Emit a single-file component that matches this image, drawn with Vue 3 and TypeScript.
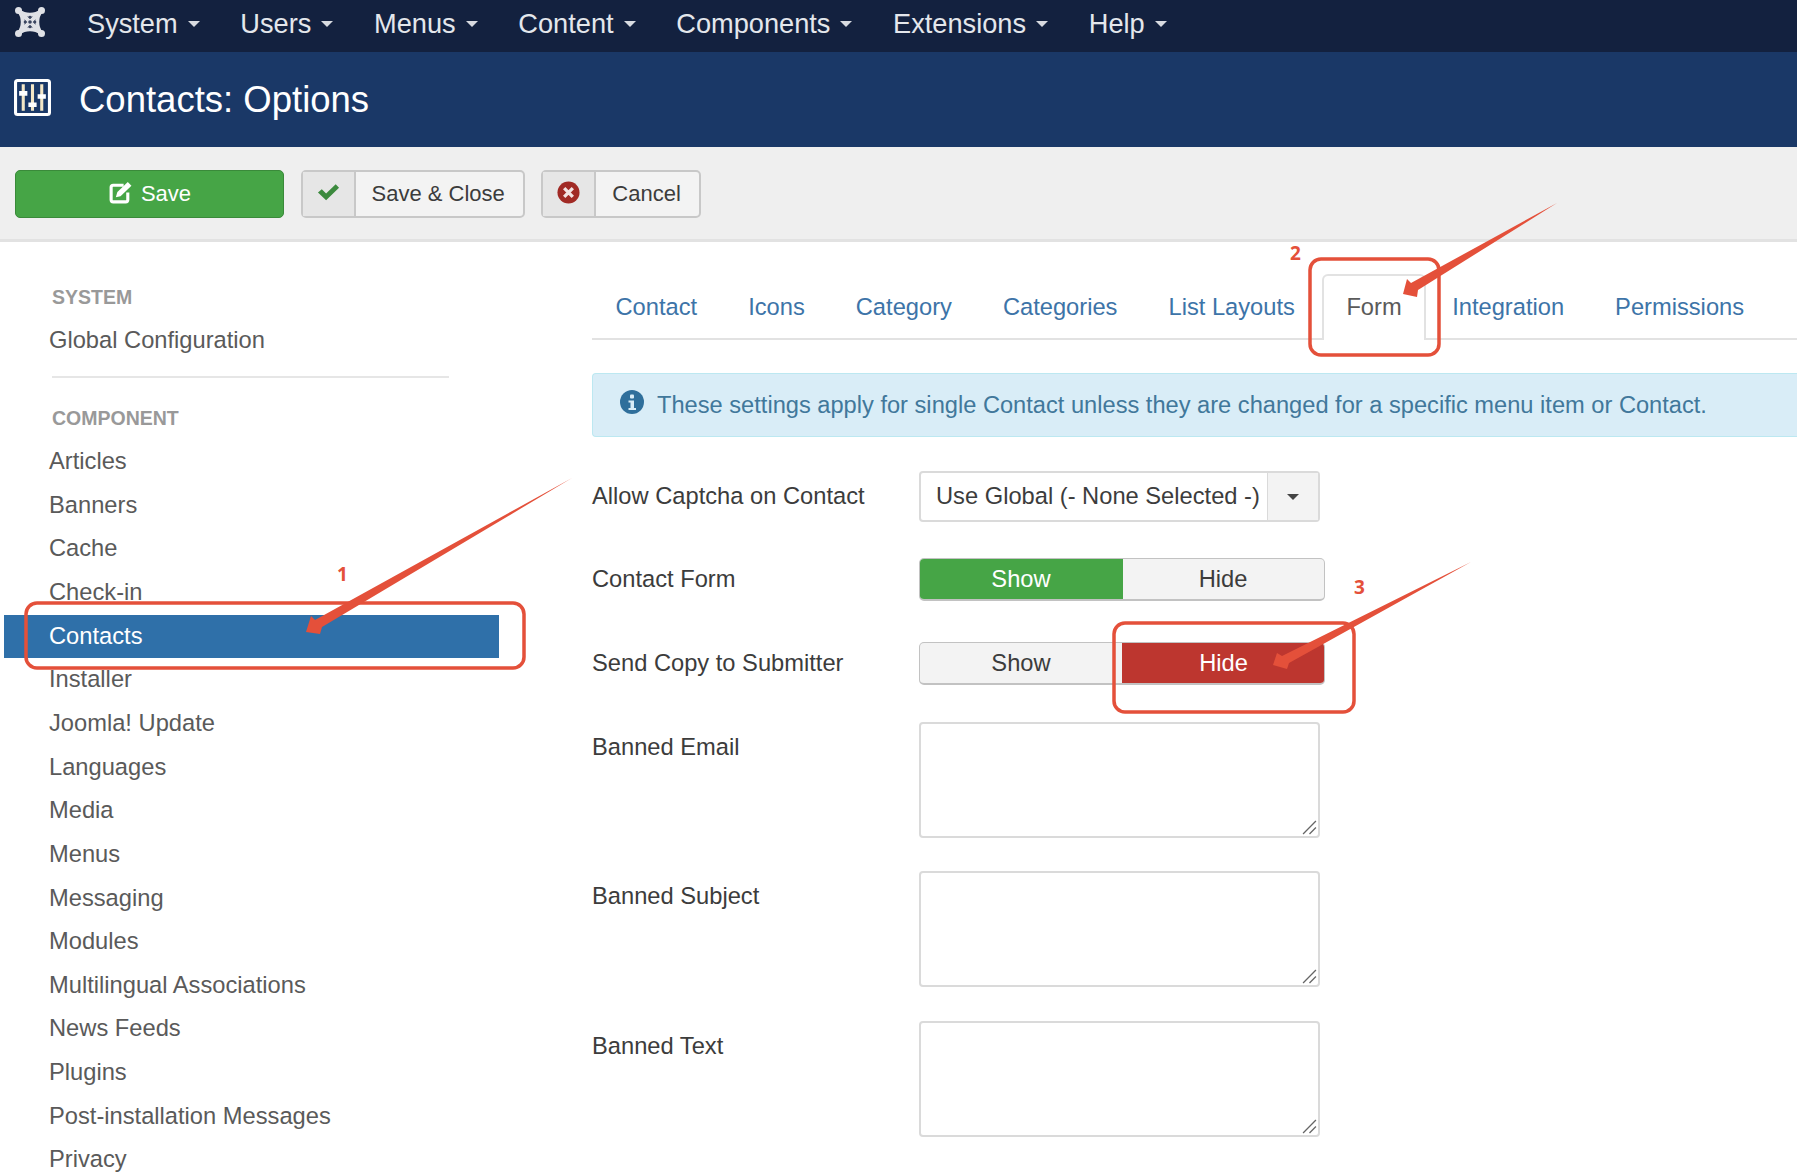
<template>
  <div class="page">
    <nav class="topnav">
      <svg class="logo" viewBox="0 0 32 32" aria-hidden="true">
        <g fill="none" stroke="#dfe1e6" stroke-linecap="round">
          <path d="M5 5 L27 27 M27 5 L5 27" stroke-width="4" />
          <path d="M5 5 C11 10 21 10 27 5 M5 27 C11 22 21 22 27 27 M5 5 C10 11 10 21 5 27 M27 5 C22 11 22 21 27 27" stroke-width="4" />
        </g>
        <circle cx="4.500" cy="4.500" r="3.500" fill="#dfe1e6" />
        <circle cx="27.500" cy="4.500" r="3.500" fill="#dfe1e6" />
        <circle cx="4.500" cy="27.500" r="3.500" fill="#dfe1e6" />
        <circle cx="27.500" cy="27.500" r="3.500" fill="#dfe1e6" />
        <g fill="#3a4560">
          <circle cx="16" cy="16" r="1.800" />
          <circle cx="11" cy="16" r="1.300" />
          <circle cx="21" cy="16" r="1.300" />
          <circle cx="16" cy="11" r="1.300" />
          <circle cx="16" cy="21" r="1.300" />
        </g>
      </svg>
      <a v-for="item in menu" :key="item" class="nav-item">{{ item }}<span class="caret"></span></a>
    </nav>

    <header class="titlebar">
      <svg class="title-icon" viewBox="0 0 36 36" aria-hidden="true">
        <rect x="1.500" y="1.500" width="33" height="33" rx="2" fill="none" stroke="#fff" stroke-width="3" />
        <path d="M9 5V31M18 5V31M27 5V31" stroke="#f4e7c6" stroke-width="3" />
        <path d="M5 14H13M14 25H22M23 17H31" stroke="#fff" stroke-width="4.500" />
      </svg>
      <h1>Contacts: Options</h1>
    </header>

    <div class="toolbar">
      <button class="btn-save">
        <svg viewBox="0 0 24 24" class="save-icon" aria-hidden="true">
          <path d="M15 5H5a2 2 0 0 0-2 2v12a2 2 0 0 0 2 2h12a2 2 0 0 0 2-2v-7" fill="none" stroke="#fff" stroke-width="3" />
          <path d="M9 11.500 19 2l3.500 3.500L12 15.500l-4.500 1z" fill="#fff" />
        </svg>
        Save
      </button>
      <button class="btn-tool">
        <span class="tool-icon">
          <svg viewBox="0 0 24 24" aria-hidden="true"><path d="M1 12l4-3.500 4.500 4.500L19.500 3.500 23 7 9.500 20z" fill="#3c8a3e" /></svg>
        </span>
        <span class="tool-label">Save &amp; Close</span>
      </button>
      <button class="btn-tool">
        <span class="tool-icon">
          <svg viewBox="0 0 24 24" aria-hidden="true">
            <circle cx="12" cy="12" r="11.500" fill="#a12a25" />
            <path d="M7.500 7.500l9 9M16.500 7.500l-9 9" stroke="#f3e3e2" stroke-width="3.500" />
          </svg>
        </span>
        <span class="tool-label">Cancel</span>
      </button>
    </div>

    <div class="content">
      <aside class="sidebar">
        <div class="side-head">SYSTEM</div>
        <a class="side-item">Global Configuration</a>
        <div class="side-divider"></div>
        <div class="side-head">COMPONENT</div>
        <a
          v-for="item in components"
          :key="item"
          class="side-item"
          :class="{ active: item === 'Contacts' }"
        >{{ item }}</a>
      </aside>

      <main class="main">
        <ul class="tabs">
          <li v-for="tab in tabs" :key="tab" class="tab" :class="{ current: tab === 'Form' }">{{ tab }}</li>
        </ul>

        <div class="alert">
          <svg viewBox="0 0 24 24" class="alert-icon" aria-hidden="true">
            <circle cx="12" cy="12" r="12" fill="#2f6f9b" />
            <rect x="10" y="4.500" width="4" height="4" rx="1" fill="#d9edf7" />
            <path d="M8.500 10.500H14V18h2v2H8.500v-2h2v-5.500h-2z" fill="#d9edf7" />
          </svg>
          These settings apply for single Contact unless they are changed for a specific menu item or Contact.
        </div>

        <div class="form">
          <div class="row row-select">
            <label>Allow Captcha on Contact</label>
            <div class="select">
              <span class="select-value">Use Global (- None Selected -)</span>
              <span class="select-arrow"><span class="caret dark"></span></span>
            </div>
          </div>
          <div class="row row-toggle">
            <label>Contact Form</label>
            <div class="toggle">
              <span class="on-green">Show</span>
              <span>Hide</span>
            </div>
          </div>
          <div class="row row-toggle last">
            <label>Send Copy to Submitter</label>
            <div class="toggle">
              <span>Show</span>
              <span class="on-red">Hide</span>
            </div>
          </div>
          <div v-for="name in textareas" :key="name" class="row row-area">
            <label>{{ name }}</label>
            <div class="textarea">
              <svg viewBox="0 0 14 14" class="grip" aria-hidden="true">
                <path d="M1 13 13 1M7 13l6-6" stroke="#666" stroke-width="1.200" fill="none" />
              </svg>
            </div>
          </div>
        </div>
      </main>
    </div>

    <!-- annotations drawn on top of the screenshot -->
    <svg class="notes" viewBox="0 0 1797 1172" aria-hidden="true">
      <g fill="none" stroke="#e4503a" stroke-width="3.500">
        <rect x="26" y="603" width="498" height="65" rx="11" />
        <rect x="1310" y="259" width="129" height="96" rx="11" />
        <rect x="1114" y="623" width="240" height="89" rx="11" />
      </g>
      <g fill="#e4503a">
        <path d="M306 632 L311 616 L315 620 L572 478 L322 627 L320 634 Z" />
        <path d="M1403 294 L1407 279 L1411 283 L1557 203 L1418 290 L1417 297 Z" />
        <path d="M1273 665 L1277 653 L1282 656 L1471 562 L1289 663 L1287 669 Z" />
      </g>
      <g class="note-num">
        <text x="337" y="581">1</text>
        <text x="1290" y="260">2</text>
        <text x="1354" y="594">3</text>
      </g>
    </svg>
  </div>
</template>

<script setup lang="ts">
const menu: string[] = ["System", "Users", "Menus", "Content", "Components", "Extensions", "Help"];
const tabs: string[] = ["Contact", "Icons", "Category", "Categories", "List Layouts", "Form", "Integration", "Permissions"];
const textareas: string[] = ["Banned Email", "Banned Subject", "Banned Text"];
const components: string[] = [
  "Articles",
  "Banners",
  "Cache",
  "Check-in",
  "Contacts",
  "Installer",
  "Joomla! Update",
  "Languages",
  "Media",
  "Menus",
  "Messaging",
  "Modules",
  "Multilingual Associations",
  "News Feeds",
  "Plugins",
  "Post-installation Messages",
  "Privacy",
];
</script>

<style>
html,
body {
  margin: 0;
  overflow: hidden;
  background: #fff;
}
</style>

<style scoped>
.page {
  position: relative;
  width: 1797px;
  height: 1172px;
  overflow: hidden;
  font-family: "Liberation Sans", Arial, sans-serif;
  font-size: 23.700px;
  color: #3c3c3c;
}

.topnav {
  height: 52px;
  box-sizing: border-box;
  display: flex;
  align-items: center;
  padding-left: 14px;
  background: #13213f;
  color: #e4e7ec;
}
.logo {
  width: 32px;
  height: 32px;
  margin-right: 41px;
  margin-top: -8px;
}
.nav-item {
  display: flex;
  align-items: center;
  margin-right: 40.700px;
  font-size: 27.200px;
  margin-top: -4px;
}
.caret {
  width: 0;
  height: 0;
  margin-left: 10px;
  border-left: 6px solid transparent;
  border-right: 6px solid transparent;
  border-top: 6px solid #d8dbe1;
}
.caret.dark {
  margin: 0;
  border-top-color: #444;
}

.titlebar {
  height: 95px;
  box-sizing: border-box;
  display: flex;
  align-items: center;
  padding-left: 14px;
  background: #1a3867;
  color: #fff;
}
.title-icon {
  width: 37px;
  height: 37px;
  margin-right: 28px;
  margin-top: -5px;
}
.titlebar h1 {
  margin: 0;
  font-size: 36.500px;
  font-weight: 400;
}

.toolbar {
  height: 95px;
  box-sizing: border-box;
  display: flex;
  align-items: flex-start;
  gap: 16.500px;
  padding: 23px 0 0 15px;
  background: #efefef;
  border-bottom: 3px solid #e2e2e2;
}
.toolbar button {
  height: 48px;
  box-sizing: border-box;
  padding: 0;
  font: inherit;
  font-size: 22px;
}
.btn-save {
  width: 269px;
  display: flex;
  align-items: center;
  justify-content: center;
  gap: 8px;
  color: #fff;
  background: #46a546;
  border: 1px solid #3a8a3a;
  border-radius: 5px;
}
.save-icon {
  width: 25px;
  height: 25px;
  margin-top: -3px;
}
.btn-tool {
  display: flex;
  align-items: stretch;
  color: #3c3c3c;
  background: #f3f3f3;
  border: 2px solid #c8c8c8;
  border-radius: 5px;
}
.tool-icon {
  width: 51px;
  display: flex;
  align-items: center;
  justify-content: center;
  background: #e6e6e6;
  border-right: 2px solid #c8c8c8;
}
.tool-icon svg {
  width: 23px;
  height: 23px;
  margin-top: -4px;
}
.tool-label {
  display: flex;
  align-items: center;
  padding: 0 18px 0 16px;
}

.content {
  display: grid;
  grid-template-columns: 592px 1fr;
}

.sidebar {
  display: flex;
  flex-direction: column;
  padding: 35px 0 0 4px;
  color: #5a5a5a;
}
.side-head {
  height: 41.750px;
  line-height: 40px;
  padding-left: 48px;
  font-size: 19.500px;
  font-weight: 700;
  color: #999;
}
.side-item {
  height: 43.650px;
  line-height: 43.650px;
  width: 495px;
  padding-left: 45px;
  box-sizing: border-box;
  flex-shrink: 0;
}
.side-item.active {
  background: #2f70a9;
  color: #fff;
}
.side-divider {
  width: 397px;
  height: 2px;
  margin: 14px 0 20px 48px;
  background: #e6e6e6;
}

.main {
  display: flex;
  flex-direction: column;
}
.tabs {
  display: flex;
  margin: 32px 0 0;
  padding: 0;
  height: 64px;
  list-style: none;
  border-bottom: 2px solid #e2e2e2;
  color: #3d74a8;
}
.tab {
  padding: 0 24.500px 0 23.500px;
  line-height: 66px;
  margin-right: 3px;
  flex-shrink: 0;
}
.tab.current {
  height: 64px;
  margin-bottom: -2px;
  color: #5a5a5a;
  background: #fff;
  border: 2px solid #e2e2e2;
  border-bottom: 0;
  border-radius: 6px 6px 0 0;
  box-sizing: content-box;
  padding: 0 22px;
  line-height: 62px;
}

.alert {
  display: flex;
  align-items: center;
  height: 64px;
  box-sizing: border-box;
  margin-top: 33px;
  padding-left: 27px;
  gap: 13px;
  font-size: 23.650px;
  color: #41789b;
  background: #d9edf7;
  border: 1px solid #bce8f1;
  border-right: 0;
  border-radius: 4px 0 0 4px;
  white-space: nowrap;
}
.alert-icon {
  width: 24px;
  height: 24px;
  margin-top: -6px;
}

.form {
  padding-top: 34px;
}
.row {
  display: grid;
  grid-template-columns: 327px auto;
  justify-content: start;
}
.row label {
  line-height: 50px;
}
.row-select {
  height: 87px;
}
.row-toggle {
  height: 84px;
}
.row-toggle label {
  line-height: 43px;
}
.row-toggle.last {
  height: 79.500px;
}
.row-area {
  height: 149.500px;
}

.select {
  width: 401px;
  height: 51px;
  box-sizing: border-box;
  display: flex;
  background: #fff;
  border: 2px solid #dadada;
  border-radius: 4px;
}
.select-value {
  flex: 1;
  padding-left: 15px;
  line-height: 47px;
  white-space: nowrap;
}
.select-arrow {
  width: 50px;
  display: flex;
  align-items: center;
  justify-content: center;
  background: #f3f3f3;
  border-left: 1px solid #dadada;
}

.toggle {
  width: 406px;
  height: 43px;
  box-sizing: border-box;
  display: grid;
  grid-template-columns: 1fr 1fr;
  border: 1px solid #c2c2c2;
  border-bottom-width: 2px;
  border-radius: 5px;
  background: #f3f3f3;
  text-align: center;
  line-height: 40px;
  overflow: hidden;
}
.on-green {
  margin: -1px -1px -2px -1px;
  line-height: 42px;
  background: #46a546;
  color: #fff;
}
.on-red {
  margin: -1px -1px -2px 0;
  line-height: 42px;
  background: #bd362f;
  color: #fff;
}

.textarea {
  position: relative;
  width: 401px;
  height: 116px;
  box-sizing: border-box;
  background: #fff;
  border: 2px solid #dadada;
  border-radius: 4px;
}
.grip {
  position: absolute;
  right: 1px;
  bottom: 1px;
  width: 15px;
  height: 15px;
}

.notes {
  position: absolute;
  inset: 0;
  width: 1797px;
  height: 1172px;
  pointer-events: none;
}
.note-num {
  font-family: "Noto Sans", sans-serif;
  font-size: 19px;
  font-weight: 700;
  fill: #e4503a;
}
</style>
